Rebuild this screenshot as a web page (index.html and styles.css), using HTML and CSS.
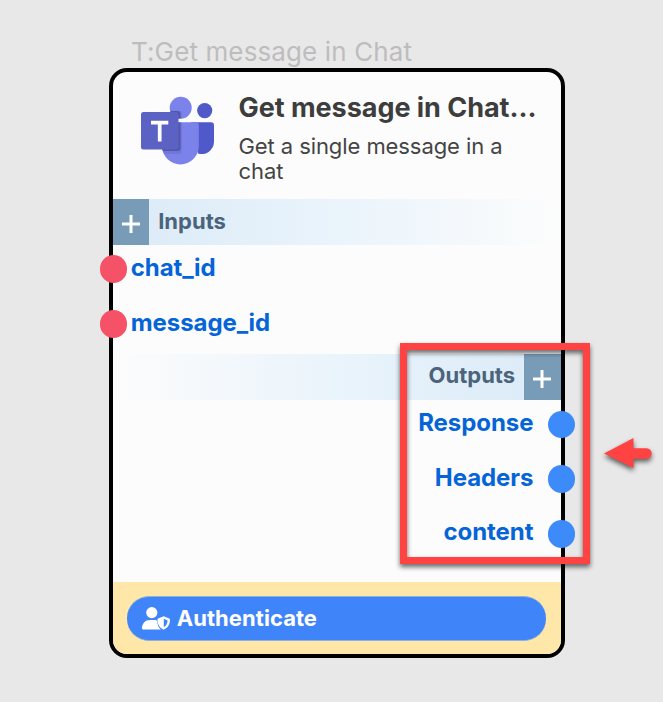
FILE: index.html
```html
<!DOCTYPE html>
<html lang="en">
<head>
<meta charset="utf-8">
<title>Get message in Chat</title>
<link rel="stylesheet" href="styles.css">
</head>
<body>
<main class="canvas">
  <div class="node-label"><span>T:Get message in Chat</span></div>
  <section class="node">
    <header class="node-header">
      <svg class="logo" viewBox="0 0 74 70" aria-hidden="true">
        <defs><clipPath id="people"><circle cx="39.700" cy="11.700" r="11"/><path d="M21 26.300h33.500a3.300 3.300 0 0 1 3.300 3.300V50a18.400 18.400 0 0 1-36.800 0z"/></clipPath></defs>
        <circle cx="63.700" cy="14.600" r="7.600" fill="#5059c9"/>
        <path d="M50 26.300h20a3 3 0 0 1 3 3v16.500a12.500 12.500 0 0 1-16 11.800z" fill="#5059c9"/>
        <circle cx="39.700" cy="11.700" r="11" fill="#7b83eb"/>
        <path d="M21 26.300h33.500a3.300 3.300 0 0 1 3.300 3.300V50a18.400 18.400 0 0 1-36.800 0z" fill="#7b83eb"/>
        <g clip-path="url(#people)" fill="#34377a">
          <rect x="4" y="14.500" width="37" height="43.500" rx="4" opacity=".15"/>
          <rect x="2" y="15" width="37.500" height="40" rx="3" opacity=".5"/>
        </g>
        <rect x="0" y="16" width="37.500" height="37.600" rx="2.500" fill="#5b62c3"/>
        <path d="M10 26.700h17.300M18.700 26v19.500" stroke="#fff" stroke-width="3.700" fill="none"/>
      </svg>
      <div class="heading">
        <h1><span>Get message in Chat…</span></h1>
        <p>Get a single message in a chat</p>
      </div>
    </header>
    <div class="band">
      <span class="add"><svg viewBox="0 0 18 18"><path d="M0 9h18M9 0v18"/></svg></span>
      <h2>Inputs</h2>
    </div>
    <ul class="ports">
      <li><i class="dot"></i><span>chat_id</span></li>
      <li><i class="dot"></i><span>message_id</span></li>
    </ul>
    <div class="band band-out">
      <span class="add"><svg viewBox="0 0 18 18"><path d="M0 9h18M9 0v18"/></svg></span>
      <h2>Outputs</h2>
    </div>
    <ul class="ports ports-out">
      <li><i class="dot"></i><span>Response</span></li>
      <li><i class="dot"></i><span>Headers</span></li>
      <li><i class="dot"></i><span>content</span></li>
    </ul>
    <footer class="node-footer">
      <button class="auth" type="button">
        <svg viewBox="0 0 28 23" aria-hidden="true">
          <circle cx="9.800" cy="5.600" r="5.600"/>
          <path d="M7.800 13h4.500c1.400 0 2.500.3 3 .7 0 3.500 1 6.700 3.600 8.800H1.400A1.300 1.300 0 0 1 0 21.200C0 16.500 3.500 13 7.800 13z"/>
          <path fill-rule="evenodd" d="M21.700 9.300l5.600 2.200c.5.200.7.600.7 1 0 4-1.600 8.200-6.300 10.200-4.700-2-6.200-6.200-6.200-10.200 0-.4.200-.8.600-1zM21.800 11.800v8.300c2.700-1.500 3.700-4 3.800-6.700z"/>
        </svg>
        <span>Authenticate</span>
      </button>
    </footer>
  </section>
  <div class="highlight"></div>
  <svg class="arrow" viewBox="0 0 50 34" aria-hidden="true"><path d="M0 15.500L29.500 0v10.300H42.500a5.200 5.200 0 0 1 0 10.400H29.500V30z"/></svg>
</main>
</body>
</html>
```
FILE: styles.css
```css
* { box-sizing: border-box; }
body {
  margin: 0;
  background: #e8e8e8;
  font-family: Inter, "Liberation Sans", sans-serif;
}
.canvas {
  position: relative;
  width: 663px;
  height: 702px;
  padding: 35px 98px 0 108.700px;
  overflow: hidden;
}
.node-label {
  height: 33.300px;
  padding-left: 22.300px;
  color: #bdbdbd;
  font-size: 26px;
  letter-spacing: .12px;
  line-height: 34px;
  white-space: nowrap;
}
.node {
  display: flex;
  flex-direction: column;
  width: 455.900px;
  height: 590px;
  border: 4px solid #000;
  border-radius: 18px;
  background: #fcfcfc;
}
.node-header {
  display: flex;
  flex: none;
  height: 127px;
  padding: 24px 0 0 28.300px;
}
.logo { flex: none; width: 74px; height: 70px; }
.heading { margin-left: 23.500px; }
h1, h2, p, ul { margin: 0; padding: 0; }
h1 {
  margin-top: -4px;
  color: #3d3d3d;
  font-size: 27px;
  letter-spacing: -.04px;
  line-height: 32px;
  white-space: nowrap;
}
p {
  width: 290px;
  margin-top: 10px;
  color: #444;
  font-size: 22px;
  letter-spacing: -.08px;
  line-height: 25px;
}
.band {
  display: flex;
  flex: none;
  align-items: center;
  height: 45.800px;
  background: linear-gradient(90deg, #daeaf7, #e8f3fb 45%, #fcfcfc);
}
.band-out {
  flex-direction: row-reverse;
  background: linear-gradient(270deg, #daeaf7, #e8f3fb 45%, #fcfcfc);
}
.add {
  display: flex;
  align-items: center;
  justify-content: center;
  width: 36.500px;
  height: 100%;
  padding-top: 3px;
  background: #789bb7;
}
.add svg {
  width: 18px;
  height: 18px;
  fill: none;
  stroke: #fff;
  stroke-width: 3;
}
h2 {
  margin: 0 9px 2px;
  color: #4c637c;
  font-size: 22px;
  line-height: 43px;
}
.band-out h2 { margin-bottom: 3px; }
.ports {
  display: flex;
  flex: none;
  flex-direction: column;
  gap: 6.800px;
  height: 109.400px;
  list-style: none;
}
.ports li {
  display: flex;
  align-items: center;
  height: 48px;
  margin-left: -12.800px;
  color: #0564d8;
  font-size: 24px;
  font-weight: 700;
  letter-spacing: -.07px;
  line-height: 44px;
}
.ports span { margin: 0 4px 2.400px 3.500px; }
.ports-out { height: 164px; }
.ports-out li {
  flex-direction: row-reverse;
  margin: 0 -14.700px 0 0;
}
.ports-out span { margin: 0 14.500px 3px 0; }
.dot {
  z-index: 1;
  width: 27.400px;
  height: 27.400px;
  border-radius: 50%;
  background: #f55167;
}
.ports-out .dot { background: #3d8bfb; }
.node-footer {
  flex: none;
  height: 72.500px;
  margin-top: auto;
  padding: 14.300px 14.500px 0;
  border-radius: 0 0 14px 14px;
  background: #ffe7a9;
}
.auth {
  display: flex;
  align-items: center;
  width: 100%;
  height: 44.500px;
  padding: 0 14.500px;
  border: 1px solid #91b0da;
  border-width: 1px 0;
  border-radius: 22px;
  background: #4084fa;
  color: #fff;
  font: 700 22px/40px Inter, "Liberation Sans", sans-serif;
  letter-spacing: .06px;
}
.auth svg { width: 28px; height: 23px; fill: #fff; }
.auth span { margin: 0 0 1px 7px; }
.highlight {
  position: absolute;
  z-index: 2;
  left: 400px;
  top: 343px;
  width: 190px;
  height: 221px;
  border: 7px solid #ff4343;
  filter: drop-shadow(0 3px 2.500px rgba(0, 0, 0, .6));
}
.arrow {
  position: absolute;
  left: 604px;
  top: 438px;
  width: 50px;
  height: 34px;
  overflow: visible;
  fill: #ff4343;
  filter: drop-shadow(0 3px 2.500px rgba(0, 0, 0, .6));
}
```
